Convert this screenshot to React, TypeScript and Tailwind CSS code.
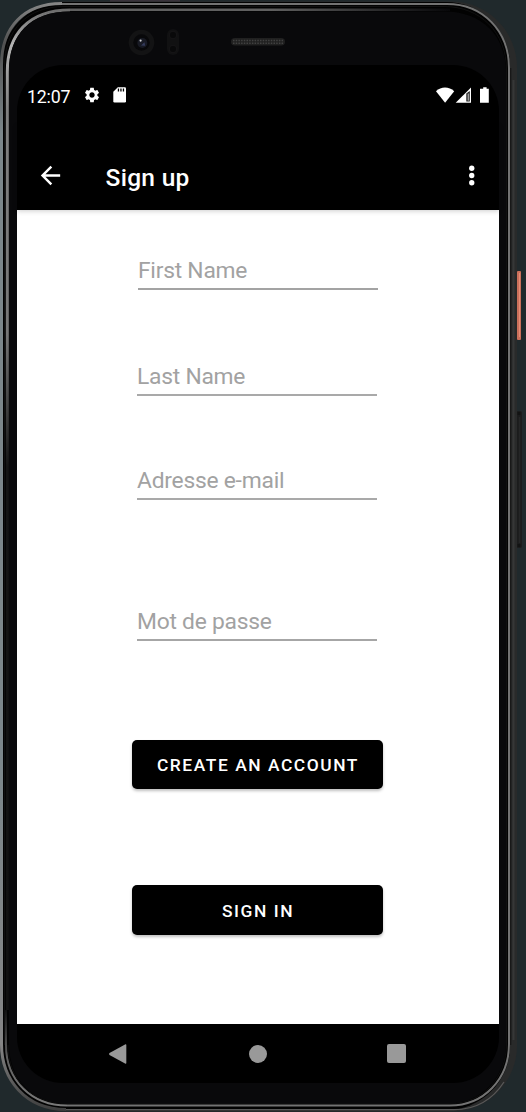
import React from "react";

function DeviceShell() {
  return (
    <svg className="absolute inset-0" width="526" height="1112" viewBox="0 0 526 1112" fill="none" aria-hidden="true">
      <defs>
        <linearGradient id="ring" x1="0" y1="0" x2="0" y2="1112" gradientUnits="userSpaceOnUse">
          <stop offset="0" stopColor="#585858" />
          <stop offset="0.04" stopColor="#b4b4b4" />
          <stop offset="0.1" stopColor="#808080" />
          <stop offset="0.3" stopColor="#777777" />
          <stop offset="0.42" stopColor="#151515" />
          <stop offset="1" stopColor="#101010" />
        </linearGradient>
        <linearGradient id="fadeRight" x1="0" y1="0" x2="450" y2="0" gradientUnits="userSpaceOnUse">
          <stop offset="0" stopColor="#606060" />
          <stop offset="0.6" stopColor="#606060" />
          <stop offset="1" stopColor="#08080a" />
        </linearGradient>
        <linearGradient id="outer" x1="0" y1="0" x2="0" y2="1112" gradientUnits="userSpaceOnUse">
          <stop offset="0" stopColor="#8a8a8a" />
          <stop offset="0.04" stopColor="#505050" />
          <stop offset="0.12" stopColor="#7c878b" />
          <stop offset="0.7" stopColor="#7c878b" />
          <stop offset="0.94" stopColor="#858585" />
          <stop offset="1" stopColor="#3c3c3c" />
        </linearGradient>
        <linearGradient id="lowerLeft" x1="0" y1="1010" x2="0" y2="1106" gradientUnits="userSpaceOnUse">
          <stop offset="0" stopColor="#101010" />
          <stop offset="0.5" stopColor="#606060" />
          <stop offset="1" stopColor="#7a7a7a" />
        </linearGradient>
      </defs>
      <rect width="526" height="1112" fill="#20292c" />
      <path d="M110 0H180V2H110Z" fill="#38323a" />
      <rect x="516" y="411" width="6" height="137" rx="2" fill="#1b1c1d" />
      <path d="M519.5 417V543" stroke="#252627" strokeWidth="1.5" />
      <path d="M517.500 412h3v3h-3zM517.500 544h3v3h-3z" fill="#121313" />
      <rect x="0" y="1.5" width="517" height="1110" rx="66" fill="#292a2a" />
      <rect x="517" y="271" width="4" height="69" rx="1" fill="#cb6f5a" />
      <path d="M519.5 273V337" stroke="#e58c75" strokeWidth="1" />
      <path d="M513.5 80V1040" stroke="#363737" strokeWidth="2" />
      <rect x="1" y="2" width="509" height="1108" rx="64" fill="#020202" />
      <path d="M62 3.5C24 3.5 1.5 27 1.5 65V1044C1.5 1080 26 1109.5 66 1109.5" stroke="url(#outer)" strokeWidth="3" />
      <path d="M66 1109.7H454C478 1109.7 493 1099 504 1082" stroke="#595959" strokeWidth="1.3" />
      <path d="M62 4H447C483 4 509 31 509 68V1044C509 1080 483 1105.5 450 1105.5H67" stroke="#737373" strokeWidth="2" />
      <path d="M67 1105.5C32 1105.500 6 1081 6 1045V1010" stroke="url(#lowerLeft)" strokeWidth="2" />
      <path d="M510.7 68V1045" stroke="#171717" strokeWidth="1.2" />
      <path d="M4.5 1045V67C4.5 29 28 6.5 64 6.5H444C480 6.5 506.5 32 506.5 70V1043C506.5 1077 484 1103.5 450 1103.5H67C32 1103.5 8 1080 8 1045" stroke="#101010" strokeWidth="1" />
      <path d="M7.3 1010V72C7.3 35 28 10 70 10" stroke="url(#ring)" strokeWidth="3" />
      <path d="M70 9.7H450" stroke="url(#fadeRight)" strokeWidth="2.4" />
      <path d="M9 70C9 34 32 11.5 70 11.5H445C481 11.5 506 35 506 72V1043C506 1078 481 1103.5 448 1103.5H68C33 1103.5 9 1080 9 1044Z" fill="#09090b" />
      <circle cx="141.5" cy="42.5" r="12.8" fill="#131314" />
      <circle cx="141.5" cy="42.5" r="8.2" fill="#08080a" />
      <circle cx="142.3" cy="43" r="5" fill="#181a24" />
      <path d="M141 45.5L144.5 42.3L145.2 45.7Z" fill="#343b5c" />
      <circle cx="140.6" cy="40.6" r="1.1" fill="#cfd0d4" />
      <rect x="167" y="29" width="12" height="26" rx="6" fill="#111112" />
      <circle cx="173" cy="35" r="3.8" fill="#09090a" stroke="#161517" />
      <circle cx="173" cy="49" r="3.8" fill="#09090a" stroke="#161517" />
      <rect x="231" y="38" width="54" height="7.5" rx="3.75" fill="#202020" />
      <path d="M233 40.5H283M233 43.2H283" stroke="#414141" strokeWidth="1.4" strokeDasharray="1.5 1.2" />
      <rect x="17" y="65" width="482" height="1018" rx="46" fill="#000" />
    </svg>
  );
}

function StatusBar() {
  return (
    <div className="flex h-[60px] items-center pl-[10px] pr-[9px] text-white">
      <span className="w-[56px] pt-[3px] text-[17.800px] leading-none tracking-[-0.200px]">12:07</span>
      <svg width="18" height="18" viewBox="0 0 24 24" fill="currentColor" aria-hidden="true">
        <path d="M19.14 12.94c.04-.3.06-.61.06-.94 0-.32-.02-.64-.07-.94l2.03-1.58c.18-.14.23-.41.12-.61l-1.92-3.32c-.12-.22-.37-.29-.59-.22l-2.39.96c-.5-.38-1.03-.7-1.62-.94l-.36-2.54c-.04-.24-.24-.41-.48-.41h-3.84c-.24 0-.43.17-.47.41l-.36 2.54c-.59.24-1.13.57-1.62.94l-2.39-.96c-.22-.08-.47 0-.59.22L2.74 8.87c-.12.21-.08.47.12.61l2.03 1.58c-.05.3-.09.63-.09.94s.02.64.07.94l-2.03 1.58c-.18.14-.23.41-.12.61l1.92 3.32c.12.22.37.29.59.22l2.39-.96c.5.38 1.03.7 1.62.94l.36 2.54c.05.24.24.41.48.41h3.84c.24 0 .44-.17.47-.41l.36-2.54c.59-.24 1.13-.56 1.62-.94l2.39.96c.22.08.47 0 .59-.22l1.92-3.32c.12-.22.07-.47-.12-.61l-2.01-1.58zM12 15.6c-1.98 0-3.6-1.62-3.6-3.6s1.62-3.6 3.6-3.6 3.6 1.62 3.6 3.6-1.62 3.6-3.6 3.6z" />
      </svg>
      <svg className="ml-[12px]" width="14" height="16" viewBox="0 0 14 16" aria-hidden="true">
        <path d="M4.8.2H11.800Q13 .2 13 1.400V14.300Q13 15.600 11.800 15.600H1.500Q.3 15.600.3 14.300V4.800Z" fill="#fff" />
        <path d="M4.800 1.400H6.100V4.500H4.800ZM7.300 1.400H8.600V4.500H7.300ZM9.800 1.400H11.100V4.500H9.800Z" fill="#000" />
      </svg>
      <svg className="ml-auto" width="54" height="16" viewBox="0 0 54 16" aria-hidden="true">
        <path d="M0 4.200C5-.6 13-.6 18.200 4.200L9.100 15.700Z" fill="#fff" />
        <path d="M19.700 15.800L35 .5V15.800Z" fill="#fff" />
        <path d="M30.300 6.500L33.800 4V14.500H30.300Z" fill="#222" />
        <path d="M32.200 6.500V13.700" stroke="#fff" strokeWidth=".8" />
        <path d="M47.200 .2H50.600V1.700H52.800V15.700H44V1.700H47.200Z" fill="#fff" />
      </svg>
    </div>
  );
}

function AppBar() {
  return (
    <header className="relative flex h-[85px] items-start bg-black pl-[19px] pr-[13px] pt-[35px] text-white shadow-[0_1px_5px_rgba(0,0,0,0.2)]">
      <button aria-label="Navigate up" className="mt-[0.500px] size-[29px]">
        <svg width="29" height="29" viewBox="0 0 24 24" fill="currentColor">
          <path d="M20 11H7.830l5.590-5.590L12 4l-8 8 8 8 1.410-1.410L7.830 13H20v-2z" />
        </svg>
      </button>
      <h1 className="ml-[40.500px] mt-[1.500px] text-[24.500px] font-medium leading-[32px] tracking-[0.300px]">Sign up</h1>
      <button aria-label="More options" className="ml-auto mt-[1px] size-[29px]">
        <svg width="29" height="29" viewBox="0 0 24 24" fill="currentColor">
          <circle cx="12.200" cy="6" r="2.200" />
          <circle cx="12.200" cy="12" r="2.200" />
          <circle cx="12.200" cy="18" r="2.200" />
        </svg>
      </button>
    </header>
  );
}

function Field({ label, className, type = "text" }: { label: string; className: string; type?: string }) {
  return (
    <input
      type={type}
      placeholder={label}
      aria-label={label}
      className={`block h-[40px] w-[240px] shrink-0 border-b-2 bg-transparent pt-[2px] text-[22.800px] tracking-[-0.230px] text-black outline-none placeholder:text-[#a2a2a2] ${className}`}
    />
  );
}

function ActionButton({ children, className }: { children: React.ReactNode; className: string }) {
  return (
    <button
      className={`ml-[115px] flex w-[250.500px] shrink-0 items-center justify-center rounded-[5px] bg-black pl-[1.500px] pt-[1.500px] text-[17.400px] font-medium tracking-[1.550px] text-white shadow-[0_2px_3px_rgba(0,0,0,0.25)] ${className}`}
    >
      {children}
    </button>
  );
}

export default function App() {
  return (
    <div className="relative h-[1112px] w-[526px] overflow-hidden font-['Roboto',sans-serif]">
      <DeviceShell />
      <div className="relative ml-[17px] flex h-[1083px] w-[482px] flex-col pt-[65px]">
        <StatusBar />
        <AppBar />
        <main className="flex h-[814px] flex-col bg-white">
          <Field label="First Name" className="ml-[121px] mt-[40px] border-[#a3a3a3]" />
          <Field label="Last Name" className="ml-[120px] mt-[66px] border-[#a9a9a9]" />
          <Field label="Adresse e-mail" className="ml-[120px] mt-[64px] border-[#a9a9a9]" type="email" />
          <Field label="Mot de passe" className="ml-[120px] mt-[101px] border-[#a6a6a6]" type="password" />
          <ActionButton className="mt-[99px] h-[49px]">CREATE AN ACCOUNT</ActionButton>
          <ActionButton className="mt-[96px] h-[50px]">SIGN IN</ActionButton>
        </main>
        <nav className="flex h-[59px] items-center pl-[92px] text-[#999]">
          <button aria-label="Back">
            <svg width="18" height="20" viewBox="0 0 18 20" fill="currentColor">
              <path d="M.500 9Q-.300 10 .500 11L16.500 19.800Q17.300 20 17.300 19V1Q17.300 0 16.500.200Z" />
            </svg>
          </button>
          <button aria-label="Home" className="ml-[122px] size-[18px] rounded-full bg-[#999]" />
          <button aria-label="Overview" className="ml-[120px] size-[19px] rounded-[2px] bg-[#999]" />
        </nav>
      </div>
    </div>
  );
}
